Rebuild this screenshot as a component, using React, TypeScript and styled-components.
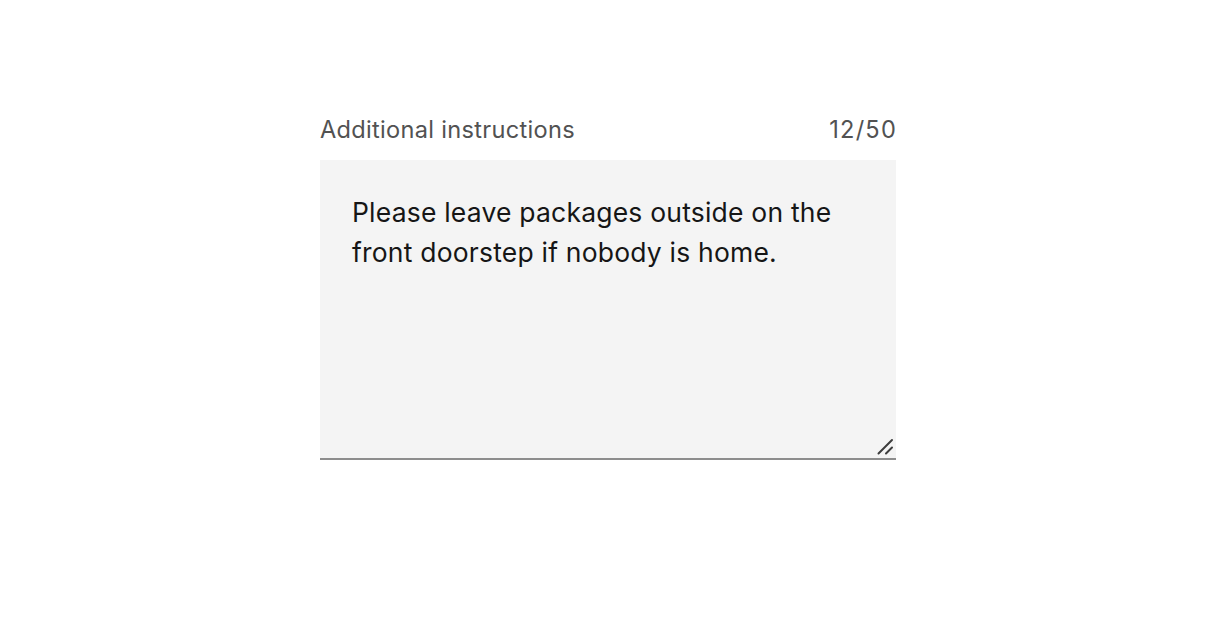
import styled, { createGlobalStyle } from "styled-components";

const GlobalStyle = createGlobalStyle`
  html, body {
    margin: 0;
    background: #ffffff;
  }
  body {
    font-family: Inter, "Noto Sans", sans-serif;
  }
`;

const Page = styled.main`
  min-height: 620px;
  display: flex;
  justify-content: center;
  padding-top: 114px;
  box-sizing: border-box;
`;

const Field = styled.div`
  width: 576px;
  display: flex;
  flex-direction: column;
`;

const LabelRow = styled.div`
  display: flex;
  justify-content: space-between;
  align-items: center;
  height: 32px;
  margin-bottom: 14px;
`;

const Label = styled.label`
  font-size: 23.6px;
  line-height: 32px;
  letter-spacing: 0.3px;
  color: #525252;
`;

const Counter = styled.span`
  font-size: 23.6px;
  line-height: 32px;
  letter-spacing: 1.2px;
  margin-right: -1px;
  color: #525252;
`;

const InputWrap = styled.div`
  position: relative;
  width: 576px;
  height: 300px;
`;

const TextArea = styled.textarea`
  display: block;
  box-sizing: border-box;
  width: 100%;
  height: 100%;
  margin: 0;
  padding: 32px 32px 22px;
  border: none;
  border-bottom: 2px solid #8d8d8d;
  border-radius: 0;
  background: #f4f4f4;
  color: #161616;
  font-family: Inter, "Noto Sans", sans-serif;
  font-size: 26.5px;
  line-height: 40px;
  letter-spacing: 0.2px;
  resize: none;
  outline: none;
`;

const Grip = styled.svg`
  position: absolute;
  right: 2px;
  bottom: 2px;
  width: 20px;
  height: 20px;
  pointer-events: none;
`;

export default function App() {
  return (
    <>
      <GlobalStyle />
      <Page>
        <Field>
          <LabelRow>
            <Label htmlFor="instructions">Additional instructions</Label>
            <Counter>12/50</Counter>
          </LabelRow>
          <InputWrap>
            <TextArea
              id="instructions"
              defaultValue="Please leave packages outside on the front doorstep if nobody is home."
            />
            <Grip viewBox="0 0 20 20">
              <path
                d="M4.5 15.5 L18 2 M12 15.5 L18 9.5"
                stroke="#3d3d3d"
                strokeWidth="2"
                strokeLinecap="round"
                fill="none"
              />
            </Grip>
          </InputWrap>
        </Field>
      </Page>
    </>
  );
}
